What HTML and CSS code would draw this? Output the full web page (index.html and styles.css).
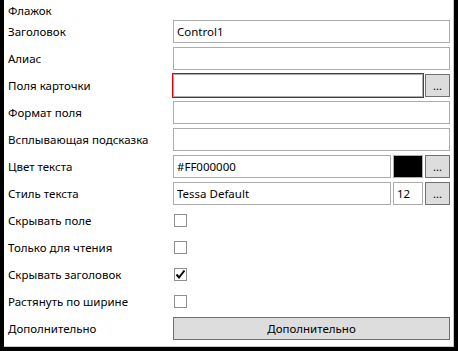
FILE: index.html
```html
<!DOCTYPE html>
<html lang="ru">
<head>
<meta charset="utf-8">
<title>Флажок</title>
<link rel="stylesheet" href="styles.css">
</head>
<body>
<div class="panel">
  <div class="title">Флажок</div>
  <div class="form">
    <div class="label">Заголовок</div>
    <div class="ctrl"><div class="field grow">Control1</div></div>

    <div class="label">Алиас</div>
    <div class="ctrl"><div class="field grow"></div></div>

    <div class="label">Поля карточки</div>
    <div class="ctrl"><div class="field grow invalid"></div><div class="btn dots">...</div></div>

    <div class="label">Формат поля</div>
    <div class="ctrl"><div class="field grow"></div></div>

    <div class="label">Всплывающая подсказка</div>
    <div class="ctrl"><div class="field grow"></div></div>

    <div class="label">Цвет текста</div>
    <div class="ctrl"><div class="field grow">#FF000000</div><div class="swatch"></div><div class="btn dots">...</div></div>

    <div class="label">Стиль текста</div>
    <div class="ctrl"><div class="field grow">Tessa Default</div><div class="field size">12</div><div class="btn dots">...</div></div>

    <div class="label">Скрывать поле</div>
    <div class="ctrl"><div class="check"></div></div>

    <div class="label">Только для чтения</div>
    <div class="ctrl"><div class="check"></div></div>

    <div class="label">Скрывать заголовок</div>
    <div class="ctrl"><div class="check"><svg width="11" height="11" viewBox="0 0 11 11"><path d="M1.5 5.5 L4 8.5 L9.5 1.5" fill="none" stroke="#000" stroke-width="2"/></svg></div></div>

    <div class="label">Растянуть по ширине</div>
    <div class="ctrl"><div class="check"></div></div>

    <div class="label">Дополнительно</div>
    <div class="ctrl"><div class="btn wide">Дополнительно</div></div>
  </div>
</div>
</body>
</html>
```
FILE: styles.css
```css
html, body {
  margin: 0;
  padding: 0;
  background: #000;
}
body {
  width: 458px;
  height: 351px;
  overflow: hidden;
  font-family: "Noto Sans", "Open Sans", sans-serif;
  font-size: 11.5px;
  color: #000;
}
.panel {
  margin-left: 4px;
  width: 449px;
  height: 346px;
  background: #fff;
  border-right: 1px solid #c8c8c8;
  border-bottom: 1px solid #c8c8c8;
  padding: 2px 3px 0 4px;
  box-sizing: content-box;
  width: 442px;
  height: 344px;
}
.title {
  height: 18px;
  line-height: 18px;
}
.form {
  display: grid;
  grid-template-columns: 165px 277px;
  grid-auto-rows: 23px;
  row-gap: 4px;
}
.label {
  display: flex;
  align-items: center;
  white-space: nowrap;
}
.ctrl {
  display: flex;
  align-items: center;
  height: 23px;
}
.field {
  box-sizing: border-box;
  height: 23px;
  border: 1px solid #acacac;
  background: #fff;
  padding: 0 3px;
  line-height: 21px;
  white-space: nowrap;
  overflow: hidden;
}
.grow {
  flex: 1;
}
.invalid {
  outline: 1px solid #e30000;
}
.btn {
  box-sizing: border-box;
  height: 23px;
  border: 1px solid #707070;
  background: #dddddd;
  text-align: center;
  line-height: 21px;
}
.dots {
  width: 25px;
  margin-left: 2px;
  font-size: 11px;
}
.wide {
  flex: 1;
}
.swatch {
  box-sizing: border-box;
  width: 30px;
  height: 23px;
  margin-left: 2px;
  border: 1px solid #acacac;
  background: #000;
}
.size {
  width: 30px;
  margin-left: 2px;
  padding: 0 3px;
}
.check {
  box-sizing: border-box;
  width: 13px;
  height: 13px;
  margin-left: 1px;
  border: 1px solid #8f8f8f;
  background: #fff;
  display: flex;
  align-items: center;
  justify-content: center;
}
.check svg {
  display: block;
}
```
